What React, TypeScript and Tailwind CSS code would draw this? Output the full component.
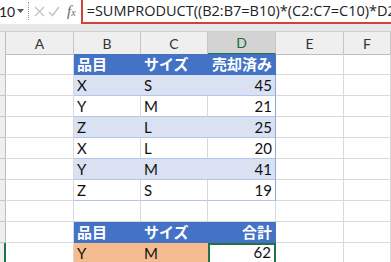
import React from 'react'

const cols = 'grid grid-cols-[6px_68px_67px_67px_68px_68px_1fr]'
const latin = "font-['Lato','Liberation_Sans','Noto_Sans_CJK_JP',sans-serif]"
const cjk = "font-['Noto_Sans_CJK_JP',sans-serif]"

type Row = { b: string; c: string; d: string; kind: 'head' | 'band' | 'plain' | 'blank' | 'pick' }

const rows: Row[] = [
  { b: '品目', c: 'サイズ', d: '売却済み', kind: 'head' },
  { b: 'X', c: 'S', d: '45', kind: 'band' },
  { b: 'Y', c: 'M', d: '21', kind: 'plain' },
  { b: 'Z', c: 'L', d: '25', kind: 'band' },
  { b: 'X', c: 'L', d: '20', kind: 'plain' },
  { b: 'Y', c: 'M', d: '41', kind: 'band' },
  { b: 'Z', c: 'S', d: '19', kind: 'plain' },
  { b: '', c: '', d: '', kind: 'blank' },
  { b: '品目', c: 'サイズ', d: '合計', kind: 'head' },
  { b: 'Y', c: 'M', d: '62', kind: 'pick' },
]

function Cell({ children, className = '' }: { children?: React.ReactNode; className?: string }) {
  return <div className={`h-[21px] flex items-end pb-[1px] px-[3px] text-[15px] leading-[18px] text-[#111] ${latin} ${className}`}>{children}</div>
}

function DataRow({ r, idx }: { r: Row; idx: number }) {
  const grid = 'border-r border-b border-[#d9d9d9]'
  const last = idx === rows.length - 1
  let b = grid, c = grid, d = grid
  if (r.kind === 'head') {
    b = c = 'bg-[#4472c4] border-b border-[#4472c4] text-white font-bold'
    d = 'bg-[#4472c4] border-b border-r border-[#4472c4] text-white font-bold justify-end'
  } else if (r.kind === 'band') {
    b = c = 'bg-[#d9e1f2] border-b border-[#b4c6e7]'
    d = 'bg-[#d9e1f2] border-b border-[#b4c6e7] border-r-[#8ea9db] border-r justify-end'
  } else if (r.kind === 'plain') {
    b = c = 'border-r border-b border-[#d9d9d9] border-b-[#b4c6e7]'
    d = 'border-b border-[#b4c6e7] border-r border-r-[#8ea9db] justify-end'
  } else if (r.kind === 'pick') {
    b = c = 'bg-[#f5bd8f] border-b border-[#f5bd8f]'
    d = 'border-2 border-[#217346] justify-end'
  }
  return (
    <div className={cols}>
      <div className={`h-[21px] bg-[#efefef] border-b border-[#c6c6c6] ${last ? 'border-r-2 border-r-[#217346]' : 'border-r border-r-[#bdbdbd]'}`} />
      <Cell className={`${grid} border-l border-l-transparent`} />
      <Cell className={`${b} ${r.kind === 'head' ? cjk : ''}`}>{r.b}</Cell>
      <Cell className={`${c} ${r.kind === 'head' ? cjk : ''}`}>{r.c}</Cell>
      <Cell className={`${d} ${r.kind === 'head' ? cjk : ''}`}>{r.d}</Cell>
      <Cell className={grid} />
      <Cell className={grid} />
    </div>
  )
}

export default function App() {
  const letters = ['A', 'B', 'C', 'D', 'E', 'F']
  return (
    <div className="w-[391px] h-[262px] overflow-hidden bg-white">
      {/* formula bar */}
      <div className="flex h-[24px] bg-white">
        <div className="flex items-center w-[28px] pb-[2px]">
          <span className={`text-[14px] text-[#222] ${latin} -ml-[1px]`}>10</span>
          <svg width="7" height="5" viewBox="0 0 7 5" className="ml-[2px]"><path d="M0 0 L7 0 L3.5 4 Z" fill="#555" /></svg>
        </div>
        <div className="w-0 h-[18px] mt-[2px] border-l border-dotted border-[#9a9a9a]" />
        <div className="flex items-center gap-[3px] pl-[5px] pb-[2px]">
          <svg width="11" height="11" viewBox="0 0 11 11"><path d="M1 1 L10 10 M10 1 L1 10" stroke="#c4c4c4" strokeWidth="1.4" /></svg>
          <svg width="12" height="11" viewBox="0 0 12 11"><path d="M1 6 L4.5 9.5 L11 1" stroke="#c4c4c4" strokeWidth="1.5" fill="none" /></svg>
          <span className="ml-[4px] text-[15px] italic text-[#666] font-['Liberation_Serif',serif] leading-none">f<span className="text-[10px]">x</span></span>
        </div>
        <div className="ml-[5px] flex-1 border-l-2 border-b-2 border-[#d2423c] flex items-center pl-[4px] overflow-hidden whitespace-nowrap">
          <span className="text-[14.5px] text-[#222] font-['Open_Sans',sans-serif]">=SUMPRODUCT((B2:B7=B10)*(C2:C7=C10)*D2:D7)</span>
        </div>
      </div>
      {/* gap */}
      <div className="h-[8px] bg-[#e8e8e8] border-b border-[#d0d0d0]" />
      {/* column headers */}
      <div className={`${cols} bg-[#efefef] h-[22px]`}>
        <div className="border-r border-[#bdbdbd] border-b border-b-[#bdbdbd]" />
        {letters.map(l => (
          <div
            key={l}
            className={`flex items-center justify-center text-[14px] ${latin} ${l === 'D' ? 'bg-[#d3d3d3] text-[#1e6b40] border-b-2 border-b-[#217346]' : 'text-[#333] border-b border-b-[#bdbdbd]'} border-r border-r-[#c6c6c6]`}
          >
            {l}
          </div>
        ))}
      </div>
      {rows.map((r, i) => <DataRow key={i} r={r} idx={i} />)}
    </div>
  )
}
